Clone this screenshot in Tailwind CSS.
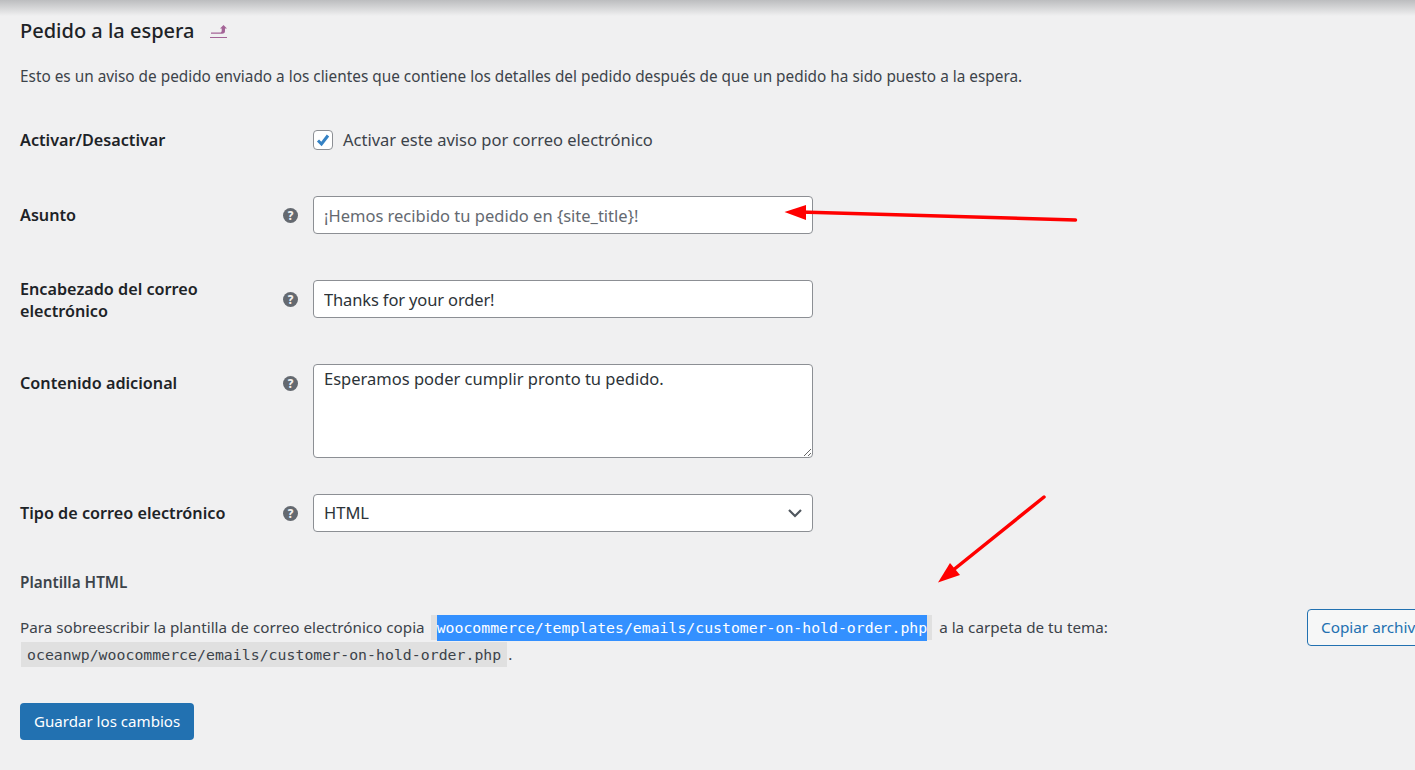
<!DOCTYPE html>
<html lang="es">
<head>
    <meta charset="UTF-8">
    <title>Pedido a la espera</title>
    <script src="https://cdn.jsdelivr.net/npm/@tailwindcss/browser@4"></script>
</head>
<body class="relative h-[770px] overflow-hidden bg-[#f0f0f1] font-['Noto_Sans',sans-serif] text-[#3c434a]">
    <div class="absolute inset-x-0 top-0 h-[16px] bg-gradient-to-b from-[#bcbdbf] to-[#f0f0f1]"></div>

    <main class="relative px-[20px] pt-[18px]">
        <h2 class="flex h-[26px] items-center text-[20px] font-medium text-[#1d2327]">
            Pedido a la espera
            <a class="ml-[15px] border-b border-[#a46497] pb-[3px]" href="#">
                <svg class="h-[9px] w-[17px]" viewBox="0 0 17 9" fill="#a46497"><path d="M1 7.500h9c1 0 1.700-.6 1.700-1.500V3.500H10L13.500 0 17 3.500h-2V6c0 1.700-1 2.700-3 2.700H1z"/></svg>
            </a>
        </h2>
        <p class="mt-[19px] h-[26px] text-[15.350px] leading-[26px]">Esto es un aviso de pedido enviado a los clientes que contiene los detalles del pedido después de que un pedido ha sido puesto a la espera.</p>

        <form>
            <div class="mt-[32px] grid h-[38px] grid-cols-[293px_500px] items-center">
                <label class="text-[16.200px] font-semibold text-[#1d2327]">Activar/Desactivar</label>
                <label class="flex items-center text-[16.500px]">
                    <span class="flex h-[20px] w-[20px] items-center justify-center rounded-[4px] border border-[#8c8f94] bg-white">
                        <svg class="h-[14px] w-[14px]" viewBox="0 0 14 14" fill="none" stroke="#3582c4" stroke-width="3"><path d="M2 7.500l3.500 3.500L12 2.500"/></svg>
                    </span>
                    <span class="ml-[10px]">Activar este aviso por correo electrónico</span>
                </label>
            </div>

            <div class="mt-[37px] grid grid-cols-[293px_500px]">
                <div class="relative h-[38px]">
                    <label class="text-[16.200px] font-semibold leading-[38px] text-[#1d2327]">Asunto</label>
                    <svg class="absolute left-[263px] top-[12px] h-[15px] w-[15px]" viewBox="0 0 15 15"><circle cx="7.500" cy="7.500" r="7.500" fill="#646970"/><text x="7.500" y="11.500" text-anchor="middle" font-size="11.500" font-weight="800" fill="#f0f0f1" font-family="Noto Sans">?</text></svg>
                </div>
                <input class="h-[38px] rounded-[4px] border border-[#8c8f94] bg-white px-[10px] text-[16.500px] placeholder:text-[#646970]" placeholder="¡Hemos recibido tu pedido en {site_title}!">
            </div>

            <div class="mt-[46px] grid grid-cols-[293px_500px]">
                <div class="relative h-[38px]">
                    <label class="-mt-[2px] block w-[220px] text-[16.200px] font-semibold leading-[22px] text-[#1d2327]">Encabezado del correo electrónico</label>
                    <svg class="absolute left-[263px] top-[12px] h-[15px] w-[15px]" viewBox="0 0 15 15"><circle cx="7.500" cy="7.500" r="7.500" fill="#646970"/><text x="7.500" y="11.500" text-anchor="middle" font-size="11.500" font-weight="800" fill="#f0f0f1" font-family="Noto Sans">?</text></svg>
                </div>
                <input class="h-[38px] rounded-[4px] border border-[#8c8f94] bg-white px-[10px] text-[16.500px] tracking-[-0.14px] text-[#2c3338]" value="Thanks for your order!">
            </div>

            <div class="mt-[46px] grid grid-cols-[293px_500px]">
                <div class="relative h-[38px]">
                    <label class="text-[16.200px] font-semibold leading-[38px] text-[#1d2327]">Contenido adicional</label>
                    <svg class="absolute left-[263px] top-[12px] h-[15px] w-[15px]" viewBox="0 0 15 15"><circle cx="7.500" cy="7.500" r="7.500" fill="#646970"/><text x="7.500" y="11.500" text-anchor="middle" font-size="11.500" font-weight="800" fill="#f0f0f1" font-family="Noto Sans">?</text></svg>
                </div>
                <textarea class="block h-[94px] resize-y rounded-[4px] border border-[#8c8f94] bg-white px-[10px] py-[2px] text-[16.500px] text-[#2c3338]">Esperamos poder cumplir pronto tu pedido.</textarea>
            </div>

            <div class="mt-[36px] grid grid-cols-[293px_500px]">
                <div class="relative h-[38px]">
                    <label class="text-[16.200px] font-semibold leading-[38px] text-[#1d2327]">Tipo de correo electrónico</label>
                    <svg class="absolute left-[263px] top-[12px] h-[15px] w-[15px]" viewBox="0 0 15 15"><circle cx="7.500" cy="7.500" r="7.500" fill="#646970"/><text x="7.500" y="11.500" text-anchor="middle" font-size="11.500" font-weight="800" fill="#f0f0f1" font-family="Noto Sans">?</text></svg>
                </div>
                <div class="flex h-[38px] items-center justify-between rounded-[4px] border border-[#8c8f94] bg-white pl-[10px] pr-[9px] text-[16.500px] text-[#2c3338]">
                    HTML
                    <svg class="h-[10px] w-[16px]" viewBox="0 0 16 10" fill="none" stroke="#50575e" stroke-width="2.200"><path d="M2 2l6 6 6-6"/></svg>
                </div>
            </div>

            <h3 class="mt-[39px] h-[22px] text-[15.300px] font-semibold leading-[22px] text-[#3c434a]">Plantilla HTML</h3>

            <div class="relative mt-[21px] h-[53px] text-[15.220px] leading-[27px]">
                <div class="flex h-[27px] items-center">
                    <span>Para sobreescribir la plantilla de correo electrónico copia</span>
                    <code class="ml-[6px] flex h-[25px] items-center bg-[#e0e0e0] pl-[6px] pr-[5px] font-['DejaVu_Sans_Mono',monospace] text-[14.800px] tracking-[0.01px]"><span class="bg-[#3390ff] leading-[26px] text-white">woocommerce/templates/emails/customer-on-hold-order.php</span></code>
                    <span class="ml-[7px]">a la carpeta de tu tema:</span>
                </div>
                <div class="flex h-[26px] items-center">
                    <code class="ml-[1px] flex h-[25px] items-center bg-[#e0e0e0] px-[6px] font-['DejaVu_Sans_Mono',monospace] text-[14.800px] tracking-[0.04px]">oceanwp/woocommerce/emails/customer-on-hold-order.php</code>
                    <span class="ml-[1px]">.</span>
                </div>
                <a class="absolute left-[1287px] top-[-5px] flex h-[37px] w-[140px] items-center whitespace-nowrap rounded-[4px] border border-[#2271b1] bg-[#f6f7f7] pl-[13px] text-[15.300px] text-[#2271b1]" href="#">Copiar archivo</a>
            </div>

            <button type="button" class="mt-[36px] h-[37px] rounded-[4px] bg-[#2271b1] px-[14px] text-[15.100px] text-white">Guardar los cambios</button>
        </form>
    </main>

    <svg class="absolute left-0 top-0 h-[770px] w-[1415px]" viewBox="0 0 1415 770" fill="#ff0000" stroke="none">
        <path d="M1075.500 220L800 212" stroke="#ff0000" stroke-width="3.500" stroke-linecap="round"/>
        <path d="M784.500 212L806 205V220z"/>
        <path d="M1044 497L952 571" stroke="#ff0000" stroke-width="3.500" stroke-linecap="round"/>
        <path d="M938 582.500L950 563L960 575z"/>
    </svg>
</body>
</html>
